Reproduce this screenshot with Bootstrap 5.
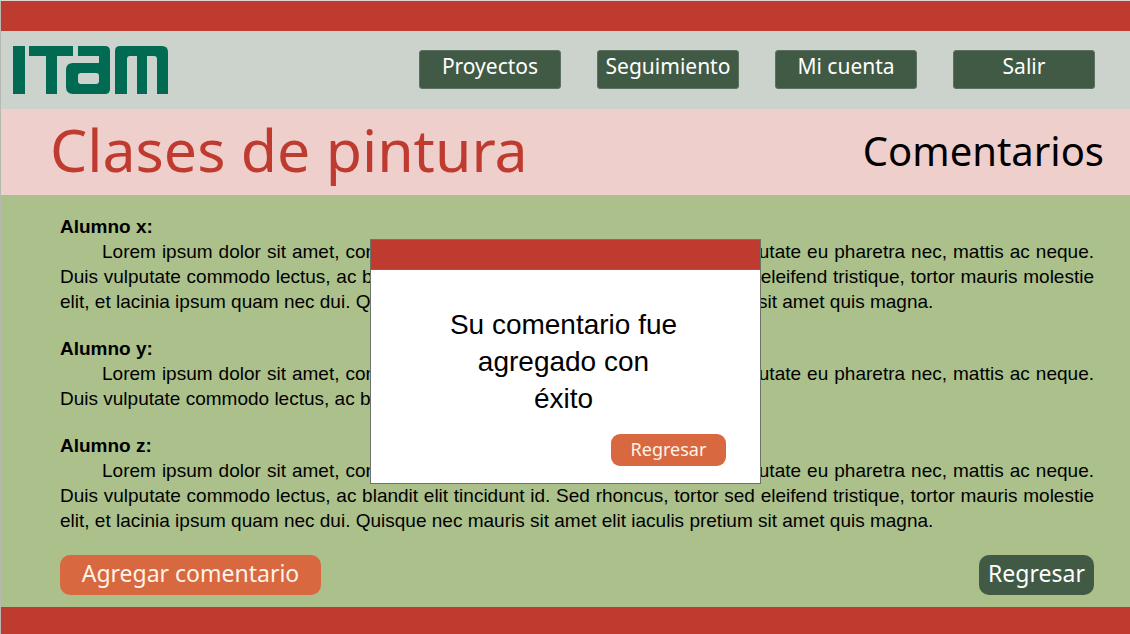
<!DOCTYPE html>
<html lang="es">
<head>
<meta charset="utf-8">
<meta name="viewport" content="width=device-width, initial-scale=1">
<title>Clases de pintura – Comentarios</title>
<link href="https://cdn.jsdelivr.net/npm/bootstrap@5.3.0/dist/css/bootstrap.min.css" rel="stylesheet">
<style>
  :root { --rojo: #bf3b30; --verde: #415a45; --naranja: #d86840; }
  body { font-family: "Liberation Sans", Arial, sans-serif; color: #000; background: #acc08b; border-top: 1px solid #e3d5d0; border-left: 1px solid #b5b9b0; }
  .display-face { font-family: "Noto Sans", sans-serif; font-weight: 400; }
  .band { background: var(--rojo); height: 30px; }
  .band-end { height: 27px; }
  .site-bar { background: #ccd3cc; min-height: 78px; padding: 0 35px 2px 12px; }
  .site-links { gap: 36px; }
  .site-links .btn { width: 142px; height: 39px; padding: 0 0 6px; font-size: 21px; line-height: 30px; border: 1px solid #5c7160; border-radius: 3px; }
  .btn-verde, .btn-verde:hover { background: var(--verde); color: #fff; }
  .btn-naranja, .btn-naranja:hover { background: var(--naranja); color: #fff3e6; }
  .title-bar { background: #efcfcc; min-height: 86px; padding: 0 26px 6px 49px; }
  .title-bar h1 { font-size: 59px; line-height: 72px; color: var(--rojo); }
  .title-bar h2 { font-size: 40px; line-height: 72px; padding-top: 4px; }
  .comments { padding: 20px 36px 12px 59px; }
  .comment { font-size: 19px; }
  .comment + .comment { margin-top: 23px; }
  .comment h3 { font-size: 19px; line-height: 24px; font-weight: 700; margin: 0; }
  .comment p { line-height: 25px; text-align: justify; text-indent: 42px; margin: 0; }
  .actions { padding-top: 22px; }
  .action { width: 115px; height: 40px; padding: 0 0 4px; font-size: 23px; line-height: 34px; border: 0; border-radius: 10px; }
  .action-wide { width: 261px; }
  .notice { position: absolute; height: auto; overflow: visible; padding-top: 238px; pointer-events: none; }
  .notice .modal-dialog { width: 391px; max-width: 100%; margin: 0 auto; }
  .notice .modal-content { border: 1px solid #6d7566; border-radius: 0; }
  .notice .band { border-bottom: 1px solid #a8564c; }
  .notice .modal-body { padding: 36px 74px 17px 70px; font-size: 28px; line-height: 37px; text-align: center; }
  .notice .modal-foot { padding: 0 34px 17px; }
  .notice .btn { width: 115px; height: 32px; padding: 0 0 3px; font-size: 18px; line-height: 28px; border: 0; border-radius: 9px; pointer-events: auto; }
</style>
</head>
<body class="min-vh-100 d-flex flex-column position-relative">
<div class="band"></div>
<header class="site-bar d-flex flex-wrap align-items-center justify-content-between">
  <a href="#" aria-label="ITAM">
    <svg class="d-block" width="156" height="50" viewBox="0 -2 156 50" fill="#006b52" aria-hidden="true">
      <path d="M0 0H12V48H0Z"/>
      <path d="M16 0H60V10H44V48H33V10H16Z"/>
      <path fill-rule="evenodd" d="M65 0H92Q97 0 97 5V43Q97 48 92 48H60Q53 48 53 41V24Q53 17 60 17H86V10H65ZM68 27Q65 27 65 30V35Q65 38 68 38H83Q86 38 86 35V30Q86 27 83 27Z"/>
      <path d="M102 5Q102 0 107 0H149Q155 0 155 6V48H144V13Q144 10 141 10H134V48H124V10H117Q114 10 114 13V48H102Z"/>
    </svg>
  </a>
  <nav class="site-links display-face d-flex flex-wrap">
    <a href="#" class="btn btn-verde">Proyectos</a>
    <a href="#" class="btn btn-verde">Seguimiento</a>
    <a href="#" class="btn btn-verde">Mi cuenta</a>
    <a href="#" class="btn btn-verde">Salir</a>
  </nav>
</header>
<div class="title-bar d-flex flex-wrap align-items-center justify-content-between">
  <h1 class="display-face m-0">Clases de pintura</h1>
  <h2 class="display-face m-0">Comentarios</h2>
</div>
<main class="comments flex-grow-1 d-flex flex-column">
  <article class="comment">
    <h3>Alumno x:</h3>
    <p>Lorem ipsum dolor sit amet, consectetur adipiscing elit. Nulla quam velit, vulputate eu pharetra nec, mattis ac neque. Duis vulputate commodo lectus, ac blandit elit tincidunt id. Sed rhoncus, tortor sed eleifend tristique, tortor mauris molestie elit, et lacinia ipsum quam nec dui. Quisque nec mauris sit amet elit iaculis pretium sit amet quis magna.</p>
  </article>
  <article class="comment">
    <h3>Alumno y:</h3>
    <p>Lorem ipsum dolor sit amet, consectetur adipiscing elit. Nulla quam velit, vulputate eu pharetra nec, mattis ac neque. Duis vulputate commodo lectus, ac blandit elit tincidunt id.</p>
  </article>
  <article class="comment">
    <h3>Alumno z:</h3>
    <p>Lorem ipsum dolor sit amet, consectetur adipiscing elit. Nulla quam velit, vulputate eu pharetra nec, mattis ac neque. Duis vulputate commodo lectus, ac blandit elit tincidunt id. Sed rhoncus, tortor sed eleifend tristique, tortor mauris molestie elit, et lacinia ipsum quam nec dui. Quisque nec mauris sit amet elit iaculis pretium sit amet quis magna.</p>
  </article>
  <div class="actions display-face d-flex justify-content-between mt-auto">
    <button type="button" class="btn btn-naranja action action-wide">Agregar comentario</button>
    <button type="button" class="btn btn-verde action">Regresar</button>
  </div>
</main>
<footer class="band band-end"></footer>

<div class="modal notice d-block" role="dialog" aria-labelledby="aviso">
  <div class="modal-dialog">
    <div class="modal-content">
      <div class="band"></div>
      <div class="modal-body" id="aviso">Su comentario fue agregado con<br>éxito</div>
      <div class="modal-foot d-flex justify-content-end">
        <button type="button" class="btn btn-naranja display-face">Regresar</button>
      </div>
    </div>
  </div>
</div>
<script src="https://cdn.jsdelivr.net/npm/bootstrap@5.3.0/dist/js/bootstrap.bundle.min.js"></script>
</body>
</html>
